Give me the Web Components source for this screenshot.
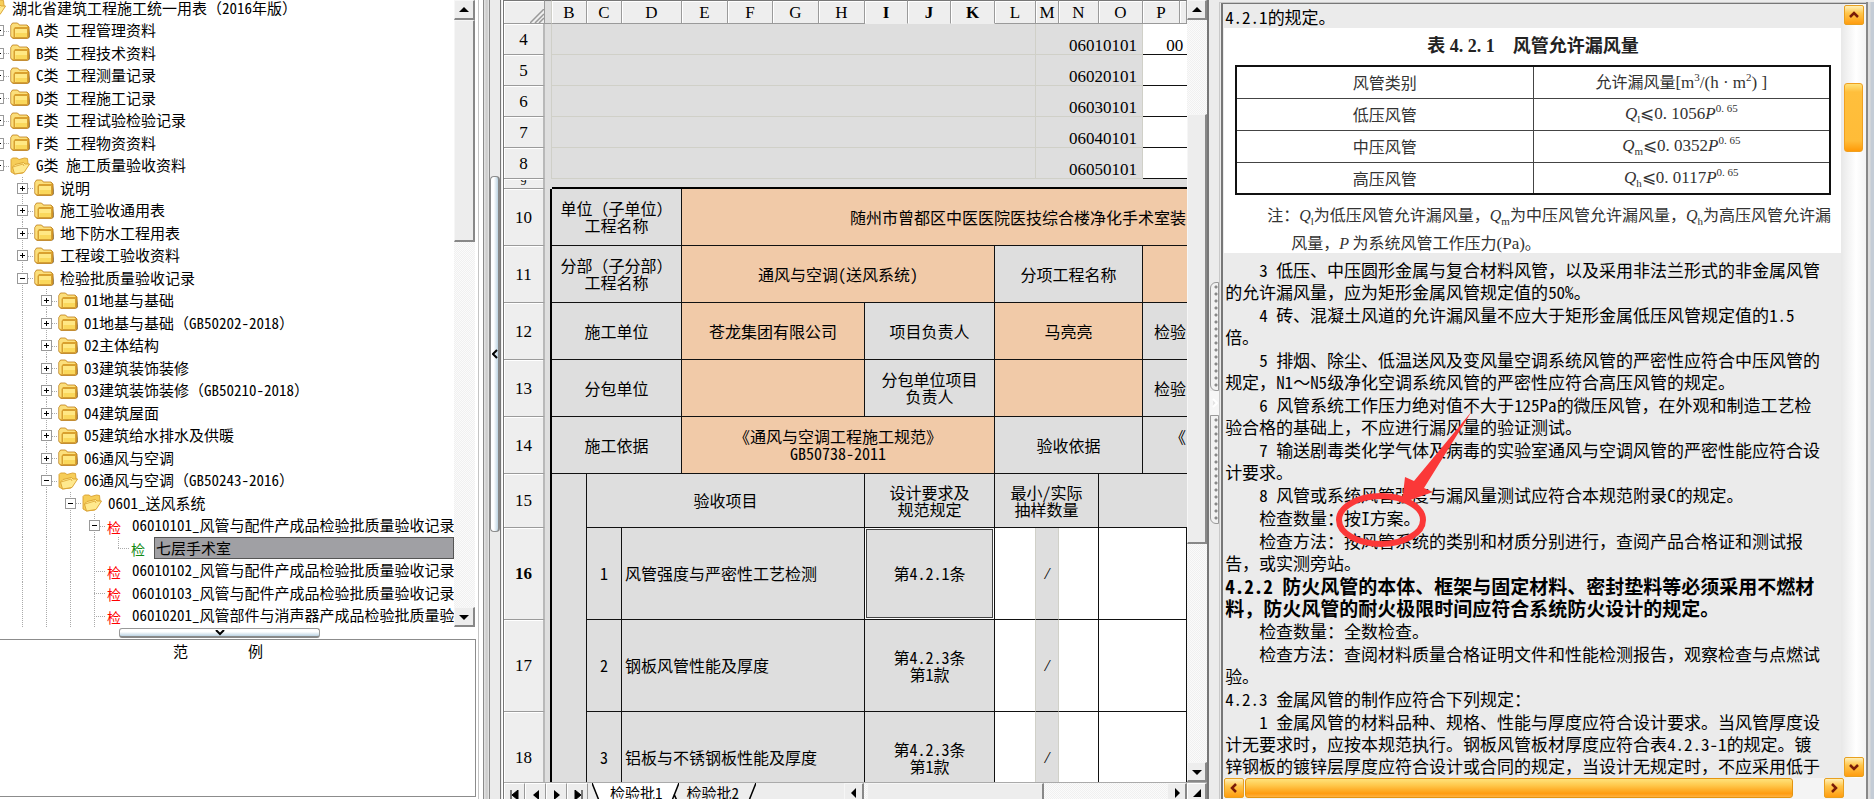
<!DOCTYPE html>
<html lang="zh-CN">
<head>
<meta charset="utf-8">
<title>施工资料管理</title>
<style>
  body { margin: 0; background: #ebebeb; font-family: "Noto Sans CJK SC", "Liberation Sans", sans-serif; color: #000; }
</style>
</head>
<body>
<doc-app></doc-app>
<script>
const BASE = `
  *, *::before, *::after { box-sizing: border-box; }
  .h { font-feature-settings: "hwid" 1; white-space: pre-wrap; }
  button { font: inherit; color: inherit; margin: 0; padding: 0; border: 0; background: none; }
`;
/* wraps Latin runs so that they take the half-width forms of the CJK font */
const tx = s => s.replace(/[A-Za-z0-9_.\-\/%() ]+/g, m => `<span class="h">${m}</span>`);

function define(name, render) {
  customElements.define(name, class extends HTMLElement {
    connectedCallback() {
      if (!this.shadowRoot) this.attachShadow({ mode: 'open' }).innerHTML = `<style>${BASE}</style>` + render(this);
    }
  });
}

/* ---------- application shell ---------- */
define('doc-app', () => `
<style>
  :host { display: flex; height: 100vh; overflow: hidden; background: #ebebeb; }
  .left { flex: 0 0 478px; display: flex; flex-direction: column; min-width: 0; background: #fff; }
  .sheet { flex: 1 1 0; min-width: 0; }
  .right { flex: 0 0 650px; }
  .fold { height: 12px; flex: none; padding: 1px 0 0 119px; }
  .fold button { display: flex; justify-content: center; align-items: center; width: 201px; height: 10px; border: 1px solid #999; border-radius: 3px; border-bottom: 2px solid #888; background: linear-gradient(#fff 40%, #bcd3e2); }
  tree-view { flex: none; height: 627px; }
  .sample { flex: 1; margin: 0 2px 2px 0; border: solid #8c8c8c; border-width: 1px 1px 1px 0; font-size: 15px; line-height: 22px; padding-left: 173px; white-space: pre; }
</style>
<div class="left">
  <tree-view></tree-view>
  <div class="fold"><button aria-label="折叠"><svg width="10" height="6" viewBox="0 0 10 6"><path d="M1 0l4 4 4-4" fill="none" stroke="#000" stroke-width="2"/></svg></button></div>
  <div class="sample">范　　　　例</div>
</div>
<pane-splitter side="left"></pane-splitter>
<sheet-view class="sheet"></sheet-view>
<pane-splitter side="right"></pane-splitter>
<spec-view class="right"></spec-view>`);

define('pane-splitter', el => el.getAttribute('side') === 'left' ? `
<style>
  :host { display: flex; flex: none; width: 26px; border-left: 1px solid #c4c4c4; background: #ebebeb; }
  .a { width: 11px; border: solid #8a8a8a; border-width: 0 1px 0 0; background: linear-gradient(90deg, #fff 4px, #8a8a8a 4px, #8a8a8a 5px, #e4e4e4 5px, #c8c8c8 8px, #ebebeb); }
  .b { width: 10px; padding-top: 176px; }
  .b button { display: flex; align-items: center; justify-content: center; width: 10px; height: 356px; border: 1px solid #8c8c8c; border-right: 2px solid #888; border-radius: 4px; background: linear-gradient(90deg, #fff 40%, #bcd3e2); }
  .c { flex: 1; border: solid #777; border-width: 0 1px; background: linear-gradient(90deg, #ddd, #fff 50%); }
</style><div class="a"></div><div class="b"><button aria-label="收起"><svg width="6" height="10" viewBox="0 0 6 10"><path d="M5 1L1 5l4 4" fill="none" stroke="#000" stroke-width="2"/></svg></button></div><div class="c"></div>` : `
<style>
  :host { display: flex; flex-direction: column; flex: none; width: 12px; background: #ebebeb; border-left: 2px solid #777; padding-top: 282px; align-items: flex-end; }
  i { width: 9px; height: 109px; border: 1px solid #999; border-radius: 6px 0 0 6px; background: #f2f2f2 radial-gradient(circle at 5px 4px, #888 1px, transparent 2px) 0 0 / 8px 7px; }
  i + button + i { border-radius: 0 0 0 6px; }
  button { width: 9px; height: 24px; background: #f6f6f6; display: flex; align-items: center; justify-content: center; }
</style><i></i><button aria-label="展开"><svg width="6" height="10" viewBox="0 0 6 10"><path d="M1 1l4 4-4 4" fill="#e4e4e4" stroke="#fff" stroke-width="2"/></svg></button><i></i>`);

/* ---------- project tree ---------- */
const FOLDER = `<svg width="20" height="18" viewBox="0 0 20 18"><path d="M2 17h16l2-2V6l-2 11z" fill="#8a8a80"/><path d="M.8 14.500V3.500L2.500 1h5l2 2h7.500l2 2v10l-1.500 1.500H3z" fill="#dca12c" stroke="#b97c1c" stroke-width=".8"/><path d="M1.200 5V3.300L2.800 1.400h4.600l2 2H16.500l1.300 1.500H5L3.500 7v8.500l-2.300-1.300z" fill="#fbdf7c"/><path d="M4.500 6.500h13v9H4.500z" fill="#ffe884" stroke="#d6a032" stroke-width="1"/><path d="M5.500 11h11.500v4H5.500z" fill="#fad85c"/></svg>`;
const OPEN = `<svg width="20" height="18" viewBox="0 0 20 18"><path d="M1 15V2.500L2.500 1h4.500l2 1.500L14.500 1l3 .5.5 5 .8.5-5.800 9L4.500 17z" fill="#f6cd58" stroke="#d9a030" stroke-width=".9"/><path d="M4.500 17l-2-7L5 7.500l8.500-2L15 7h4.600L14 15.500z" fill="#ffe98e" stroke="#d9a030" stroke-width=".9"/><path d="M3 10l10-3 1 2" fill="none" stroke="#e0ac3c" stroke-width=".9"/></svg>`;

define('tree-row', el => {
  const L = +el.getAttribute('level'), box = el.getAttribute('box'), icon = el.getAttribute('icon'), last = el.hasAttribute('last');
  const guides = Array.from({ length: L + 1 }, (_, i) => `<i class="g${i > 0 ? ' v' : ''}"></i>`).join('');
  const mark = icon === 'red' || icon === 'green' ? `<b class="${icon}">检</b>` : icon === 'open' ? OPEN : FOLDER;
  const own = L < 0 ? '<i class="g"></i>' : `<span class="g own ${last ? 'half' : 'v'}">${box ? `<button aria-label="${box === '+' ? '展开' : '收起'}" class="${box === '+' ? 'plus' : ''}"></button>` : ''}</span>`;
  return `
<style>
  :host { display: flex; align-items: stretch; white-space: nowrap; font-size: 15px; }
  :host([selected]) .label { background: #a0a0a4; border-color: #555; flex: 1; }
  .g { flex: none; width: 24px; position: relative; display: flex; align-items: center; justify-content: center; --dots: repeating-linear-gradient(#aaa 0 1px, transparent 1px 2px); }
  .v { background: var(--dots) 12px 0 / 1px 100% no-repeat; }
  .half { background: var(--dots) 12px 0 / 1px 50% no-repeat; }
  .own::after { content: ""; position: absolute; left: 12px; right: 0; top: 50%; height: 1px; background: repeating-linear-gradient(90deg, #aaa 0 1px, transparent 1px 2px); }
  .own button { z-index: 1; width: 11px; height: 11px; margin-left: 1px; border: 1px solid #999; background: linear-gradient(#000, #000) 2px 4px / 5px 1px no-repeat #fff; }
  .own button.plus { background: linear-gradient(#000, #000) 2px 4px / 5px 1px no-repeat, linear-gradient(#000, #000) 4px 2px / 1px 5px no-repeat, #fff; }
  .ic { flex: none; width: 24px; display: flex; align-items: center; }
  b { font-weight: 400; font-size: 14px; line-height: 20px; padding: 2px 0 0 1px; }
  .red { color: #f00; } .green { color: #128a12; }
  .label { border: 1px solid transparent; line-height: 20px; padding-left: 1px; }
</style>${guides}${own}<span class="ic">${mark}</span><span class="label"><slot></slot></span>`;
});

const TREE = [
  [-1, '', 'open', '湖北省建筑工程施工统一用表（2016年版）'],
  [0, '+', 'f', 'A类 工程管理资料'], [0, '+', 'f', 'B类 工程技术资料'], [0, '+', 'f', 'C类 工程测量记录'],
  [0, '+', 'f', 'D类 工程施工记录'], [0, '+', 'f', 'E类 工程试验检验记录'], [0, '+', 'f', 'F类 工程物资资料'],
  [0, '-', 'open', 'G类 施工质量验收资料'],
  [1, '+', 'f', '说明'], [1, '+', 'f', '施工验收通用表'], [1, '+', 'f', '地下防水工程用表'], [1, '+', 'f', '工程竣工验收资料'],
  [1, '-', 'f', '检验批质量验收记录'],
  [2, '+', 'f', '01地基与基础'], [2, '+', 'f', '01地基与基础（GB50202-2018）'], [2, '+', 'f', '02主体结构'],
  [2, '+', 'f', '03建筑装饰装修'], [2, '+', 'f', '03建筑装饰装修（GB50210-2018）'], [2, '+', 'f', '04建筑屋面'],
  [2, '+', 'f', '05建筑给水排水及供暖'], [2, '+', 'f', '06通风与空调'], [2, '-', 'open', '06通风与空调（GB50243-2016）'],
  [3, '-', 'open', '0601_送风系统'],
  [4, '-', 'red', '06010101_风管与配件产成品检验批质量验收记录'],
  [5, '', 'green', '七层手术室', 'selected last'],
  [4, '', 'red', '06010102_风管与配件产成品检验批质量验收记录'],
  [4, '', 'red', '06010103_风管与配件产成品检验批质量验收记录'],
  [4, '', 'red', '06010201_风管部件与消声器产成品检验批质量验'],
];
define('tree-view', () => `
<style>
  :host { display: flex; overflow: hidden; background: #fff; }
  .rows { flex: 1; min-width: 0; overflow: hidden; }
  .in { margin: -3px 0 0 -38px; }
  .h { white-space: pre; }
  tree-row { height: 22px; }
  tree-row:nth-child(even) { height: 23px; }
  scroll-bar { flex: none; width: 21px; margin-right: 3px; }
</style>
<div class="rows"><div class="in">${TREE.map(r => `<tree-row level="${r[0]}" box="${r[1]}" icon="${r[2]}" ${r[4] || ''}>${tx(r[3])}</tree-row>`).join('')}</div></div>
<scroll-bar axis="y" before="0" thumb="222"></scroll-bar>`);

/* ---------- classic scroll bar ---------- */
define('scroll-bar', el => {
  const y = el.getAttribute('axis') === 'y';
  const tri = d => `<svg width="10" height="10" viewBox="0 0 10 10"><path d="${d}"/></svg>`;
  return `
<style>
  :host { display: flex; flex-direction: ${y ? 'column' : 'row'}; background: repeating-conic-gradient(#f0f0f0 0 25%, #fbfbfb 0 50%) 0 0 / 2px 2px; }
  button, .t { flex: none; border: 1px solid #f6f6f6; border-right: 2px solid #888; border-bottom: 2px solid #888; background: #ededed; }
  button { display: flex; align-items: center; justify-content: center; ${y ? 'height: 20px' : 'width: 20px'}; }
  .t { ${y ? 'height' : 'width'}: ${el.getAttribute('thumb')}px; ${y ? 'margin-top' : 'margin-left'}: ${el.getAttribute('before')}px; }
  .s { flex: 1; }
</style>
<button aria-label="向前滚动">${tri(y ? 'M0 7l5-5 5 5z' : 'M7 0v10L2 5z')}</button><div class="t"></div><div class="s"></div><button aria-label="向后滚动">${tri(y ? 'M0 3h10L5 8z' : 'M3 0v10l5-5z')}</button>`;
});

/* ---------- spreadsheet ---------- */
const COLS = [41, 7, 35, 35, 60, 46, 45, 46, 46, 43, 43, 44, 41, 23, 40, 44, 37];
const heads = 'BCDEFGHIJKLMNOP'.split('').map(c => `<th scope="col" class="${'IJK'.includes(c) ? 'on' : ''}">${c}</th>`).join('');
const blank = (n, code, p) => `<tr class="r31"><th scope="row">${n}</th><td class="gap"></td><td colspan="11" class="f"></td><td colspan="3" class="f code">${code}</td><td colspan="2" class="p">${p}</td></tr>`;
const item = (n, k, name, rule, on) => `<tr class="r92"><th scope="row" class="${on ? 'on' : ''}">${n}</th><td class="gap edge"></td><td class="nb"></td><td>${tx(String(k))}</td><td colspan="5" class="name">${name}</td><td colspan="3" class="${on ? 'sel' : ''}">${rule.split('|').map(tx).join('<br>')}</td><td class="w nr"></td><td class="slash">/</td><td class="w"></td><td colspan="3" class="w"></td></tr>`;

define('sheet-view', () => `
<style>
  :host { display: flex; flex-direction: column; overflow: hidden; background: #ededed; }
  .main { flex: 1; min-height: 0; display: flex; }
  .grid { flex: 1; min-width: 0; overflow: hidden; background: #dedede; }
  .main > scroll-bar { flex: none; width: 20px; }
  table { table-layout: fixed; width: 100%; border-collapse: separate; border-spacing: 0; font-size: 16px; line-height: 17px; }
  td { padding: 0; overflow: hidden; text-align: center; vertical-align: middle; background: #dedede; border: solid #111; border-width: 0 1px 1px 0; }
  th { padding: 0; font: 17px/17px "Liberation Serif", serif; background: #eee; border: solid #9a9a9a; border-width: 0 1px 1px 0; box-shadow: inset 1px 1px #fff; }
  thead th { height: 24px; border-top: 1px solid #777; }
  tbody th { border-right: 2px solid #b8b8b8; }
  th.on { font-weight: 700; }
  thead th.on { border-bottom-color: #eee; }
  thead .gap { border-top: 1px solid #777; border-bottom: 1px solid #9a9a9a; }
  .gap { border: 0; border-right: 1px solid #cfcfc8; }
  .edge { border-right: 2px solid #000; }
  .r31 > * { height: 31px; }
  .r8 > * { height: 10px; line-height: 9px; font-size: 12px; }
  .r8 td { border: 0; }
  .r8 .top { border-bottom: 2px solid #000; }
  .r8 th div { height: 8px; line-height: 2px; overflow: hidden; }
  .r58 > * { height: 57px; }
  .r54 > * { height: 54px; }
  .r92 > * { height: 92px; }
  .f { border-color: #d0d0c8; }
  .code, .p { font: 17px/17px "Liberation Serif", serif; text-align: right; vertical-align: bottom; padding: 0 4px 0 0; }
  .code { padding-right: 5px; }
  .p, .w { background: #fff; }
  .nr { border-right-color: #d0d0c8; }
  .slash { border-right-color: #d0d0c8; font: italic 17px/17px "Liberation Serif", serif; }
  .o { background: #f1caa8; }
  .nb { border-bottom: 0; }
  .r { text-align: right; white-space: nowrap; padding-right: 1px; }
  .r, .p { border-right: 0; }
  .name { text-align: left; padding-left: 3px; }
  .sel { box-shadow: inset 0 0 0 1px #fff, inset 0 0 0 2px #444; }
  .bar { flex: none; height: 17px; display: flex; overflow: hidden; font-size: 15px; line-height: 20px; border-top: 1px solid #aaa; }
  .nav { flex: none; width: 21px; height: 20px; border: 1px solid #fff; border-right-color: #999; }
  .tabs { flex: 1 1 0; display: flex; min-width: 0; overflow: hidden; }
  .tab { flex: none; white-space: nowrap; height: 20px; padding: 0 9px 0 8px; }
  .tab.on { background: #fff; padding: 0 8px 0 10px; }
  .sl { flex: none; width: 8px; }
  .sl:first-child { margin-left: 4px; }
  .corner-mark { display: block; margin: 8px 0 0 auto; }
  .bar scroll-bar { flex: none; width: 343px; height: 20px; }
  .corner { flex: none; width: 20px; height: 20px; border: 1px solid #fff; border-right: 2px solid #888; display: flex; justify-content: center; align-items: center; }
</style>
<div class="main"><div class="grid"><table>
<colgroup>${COLS.map(w => `<col style="width:${w}px">`).join('')}<col></colgroup>
<thead><tr><th><svg class="corner-mark" width="14" height="14" viewBox="0 0 14 14"><path d="M0 14L14 0M5 14l9-9M9 14l5-5" stroke="#999" stroke-width="1.500"/></svg></th><td class="gap"></td>${heads}<th></th></tr></thead>
<tbody>
${blank(4, '06010101', '00')}${blank(5, '06020101', '')}${blank(6, '06030101', '')}${blank(7, '06040101', '')}${blank(8, '06050101', '')}
<tr class="r8"><th scope="row"><div>9</div></th><td class="gap"></td><td colspan="16" class="top"></td></tr>
<tr class="r58"><th scope="row">10</th><td class="gap edge"></td><td colspan="3">单位（子单位）<br>工程名称</td><td colspan="13" class="o r">随州市曾都区中医医院医技综合楼净化手术室装</td></tr>
<tr class="r58"><th scope="row">11</th><td class="gap edge"></td><td colspan="3">分部（子分部）<br>工程名称</td><td colspan="7" class="o">${tx('通风与空调(送风系统)')}</td><td colspan="4">分项工程名称</td><td colspan="2" class="o r"></td></tr>
<tr class="r58"><th scope="row">12</th><td class="gap edge"></td><td colspan="3">施工单位</td><td colspan="4" class="o">苍龙集团有限公司</td><td colspan="3">项目负责人</td><td colspan="4" class="o">马亮亮</td><td colspan="2" class="r">检验</td></tr>
<tr class="r58"><th scope="row">13</th><td class="gap edge"></td><td colspan="3">分包单位</td><td colspan="4" class="o"></td><td colspan="3">分包单位项目<br>负责人</td><td colspan="4" class="o"></td><td colspan="2" class="r">检验</td></tr>
<tr class="r58"><th scope="row">14</th><td class="gap edge"></td><td colspan="3">施工依据</td><td colspan="7" class="o">《通风与空调工程施工规范》<br>${tx('GB50738-2011')}</td><td colspan="4">验收依据</td><td colspan="2" class="r">《<br>&nbsp;</td></tr>
<tr class="r54"><th scope="row">15</th><td class="gap edge"></td><td class="nb"></td><td colspan="6">验收项目</td><td colspan="3">设计要求及<br>规范规定</td><td colspan="3">${tx('最小/实际')}<br>抽样数量</td><td colspan="3" class="r"></td></tr>
${item(16, 1, '风管强度与严密性工艺检测', '第4.2.1条', 1)}
${item(17, 2, '钢板风管性能及厚度', '第4.2.3条|第1款')}
${item(18, 3, '铝板与不锈钢板性能及厚度', '第4.2.3条|第1款')}
</tbody></table></div>
<scroll-bar axis="y" before="94" thumb="430"></scroll-bar></div>
<div class="bar">
  <button class="nav" aria-label="首页"><svg width="12" height="10" viewBox="0 0 12 10"><path d="M2 0v10M3 5l6-5v10z" stroke="#000"/></svg></button>
  <button class="nav" aria-label="上一页"><svg width="12" height="10" viewBox="0 0 12 10"><path d="M3 5l6-5v10z"/></svg></button>
  <button class="nav" aria-label="下一页"><svg width="12" height="10" viewBox="0 0 12 10"><path d="M9 5L3 0v10z"/></svg></button>
  <button class="nav" aria-label="末页"><svg width="12" height="10" viewBox="0 0 12 10"><path d="M10 0v10M9 5L3 0v10z" stroke="#000"/></svg></button>
  <div class="tabs">
    <svg class="sl" height="20" viewBox="0 0 8 20"><path d="M0 0h8v20z" fill="#fff"/><path d="M0 0l8 20" stroke="#000" stroke-width="1.500"/></svg>
    <button class="tab on">检验批${tx('1')}</button>
    <svg class="sl" height="20" viewBox="0 0 8 20"><path d="M0 0h8L0 20z" fill="#fff"/><path d="M8 0L0 20M3 11l4 9" stroke="#000" stroke-width="1.500" fill="none"/></svg>
    <button class="tab">检验批${tx('2')}</button>
    <svg class="sl" height="20" viewBox="0 0 8 20"><path d="M8 0L0 20" stroke="#000" stroke-width="1.500"/></svg>
  </div>
  <scroll-bar axis="x" before="3" thumb="177"></scroll-bar>
  <button class="corner" aria-label="调整"><svg width="8" height="8" viewBox="0 0 8 8"><path d="M8 0v8H0z"/></svg></button>
</div>`);

/* ---------- specification text ---------- */
const PARAS = [
  ['3 低压、中压圆形金属与复合材料风管，以及采用非法兰形式的非金属风管的允许漏风量，应为矩形金属风管规定值的50%。', 1],
  ['4 砖、混凝土风道的允许漏风量不应大于矩形金属低压风管规定值的1.5倍。', 1],
  ['5 排烟、除尘、低温送风及变风量空调系统风管的严密性应符合中压风管的规定，N1～N5级净化空调系统风管的严密性应符合高压风管的规定。', 1],
  ['6 风管系统工作压力绝对值不大于125Pa的微压风管，在外观和制造工艺检验合格的基础上，不应进行漏风量的验证测试。', 1],
  ['7 输送剧毒类化学气体及病毒的实验室通风与空调风管的严密性能应符合设计要求。', 1],
  ['8 风管或系统风管强度与漏风量测试应符合本规范附录C的规定。', 1],
  ['检查数量：按I方案。', 1],
  ['检查方法：按风管系统的类别和材质分别进行，查阅产品合格证和测试报告，或实测旁站。', 1],
  ['4.2.2 防火风管的本体、框架与固定材料、密封垫料等必须采用不燃材<br>料，防火风管的耐火极限时间应符合系统防火设计的规定。', 2],
  ['检查数量：全数检查。', 1],
  ['检查方法：查阅材料质量合格证明文件和性能检测报告，观察检查与点燃试验。', 1],
  ['4.2.3 金属风管的制作应符合下列规定：', 0],
  ['1 金属风管的材料品种、规格、性能与厚度应符合设计要求。当风管厚度设计无要求时，应按本规范执行。钢板风管板材厚度应符合表4.2.3-1的规定。镀锌钢板的镀锌层厚度应符合设计或合同的规定，当设计无规定时，不应采用低于', 1],
];
const para = ([s, k]) => `<p class="${['', 'in', 'bold'][k]}">${s.split('<br>').map(tx).join('<br>')}</p>`;

define('gold-button', el => `
<style>
  :host { display: block; flex: none; width: 20px; height: 20px; }
  button { display: block; width: 100%; height: 100%; border: 1px solid #e8a020; border-radius: 2px; background: linear-gradient(#fff0b8, #ffc64c 40%, #ff9d10); }
  svg { display: block; margin: auto; }
</style><button aria-label="滚动"><svg width="12" height="12" viewBox="0 0 12 12"><path d="${{ u: 'M2 8l4-4 4 4', d: 'M2 4l4 4 4-4', l: 'M8 2L4 6l4 4', r: 'M4 2l4 4-4 4' }[el.getAttribute('dir')]}" fill="none" stroke="#7a1c08" stroke-width="2.500"/></svg></button>`);

define('leak-table', () => `
<style>
  :host { display: block; background: #fff; color: #333; height: 225px; overflow: hidden; padding: 0 10px 0 11px; font-size: 16px; line-height: 27px; }
  table { width: 100%; table-layout: fixed; border-collapse: collapse; border: 2px solid #111; }
  caption { font-weight: 700; font-size: 18px; line-height: 36px; height: 37px; color: #222; word-break: keep-all; }
  caption, em, .m { font-family: "Liberation Serif", "Noto Sans CJK SC", serif; }
  .m { font-size: 17px; }
  td, th { border: 1px solid #444; height: 32px; padding: 0; line-height: 20px; text-align: center; font-weight: 400; }
  sub, sup { font-size: 11px; line-height: 0; }
  .note { margin: 6px 0 0; padding-left: 56px; text-indent: -24px; white-space: nowrap; }
  .note em, .note sub { font-family: "Liberation Serif", serif; }
</style>
<table><caption>表 4. 2. 1　风管允许漏风量</caption>
<tr><th scope="col">风管类别</th><th scope="col">允许漏风量<span class="m">[m<sup>3</sup>/(h · m<sup>2</sup>) ]</span></th></tr>
<tr><td>低压风管</td><td class="m"><em>Q</em><sub>l</sub>⩽0. 1056<em>P</em><sup>0. 65</sup></td></tr>
<tr><td>中压风管</td><td class="m"><em>Q</em><sub>m</sub>⩽0. 0352<em>P</em><sup>0. 65</sup></td></tr>
<tr><td>高压风管</td><td class="m"><em>Q</em><sub>h</sub>⩽0. 0117<em>P</em><sup>0. 65</sup></td></tr></table>
<p class="note">注：<em>Q</em><sub>l</sub>为低压风管允许漏风量，<em>Q</em><sub>m</sub>为中压风管允许漏风量，<em>Q</em><sub>h</sub>为高压风管允许漏<br>风量，<em>P</em> 为系统风管工作压力<span class="m">(Pa)</span>。</p>`);

define('spec-view', () => `
<style>
  :host { display: flex; background: #ebebeb; padding-top: 2px; }
  .frame { flex: 1; min-width: 0; border: solid #c8c8c8; border-width: 1px 0 0 1px; display: flex; flex-direction: column; }
  .inner { flex: 1; min-height: 0; display: flex; flex-direction: column; margin-left: 1px; border: solid #777; border-width: 1px 0 0 2px; }
  :host::after { content: ""; flex: none; width: 8px; border: solid #888; border-width: 0 0 0 2px; background: linear-gradient(90deg, #dcdcdc 2px, #c4ccd6 3px); }
  .row { flex: 1; min-height: 0; display: flex; }
  .doc { position: relative; flex: 1; min-width: 0; margin-left: 1px; overflow: hidden; font-size: 17px; line-height: 22px; }
  p { margin: 0 0 1px; }
  .doc > p { padding-left: 1px; max-width: 598px; }
  .doc > .first { height: 24px; line-height: 25px; margin: 0; }
  .in { text-indent: 2em; }
  .bold { font-weight: 700; font-size: 19px; white-space: nowrap; }
  leak-table { margin-bottom: 6px; }
  .v { flex: none; width: 25px; padding: 1px 0 1px 3px; display: flex; flex-direction: column; background: linear-gradient(90deg, #e8e8e8, #fff 60%, #f4f4f4); }
  .v i { width: 19px; height: 69px; margin-top: 58px; border-radius: 3px; border: 1px solid #f0a020; background: linear-gradient(#ffe27a, #ffbf3c 12%, #ffbc38 85%, #ff9a08); }
  .v s, .x s { flex: 1; }
  .x { flex: none; height: 21px; display: flex; padding: 0 22px 1px 1px; background: #f4f4f4; }
  .x i { flex: none; width: 548px; margin-left: 1px; border-radius: 3px; border: 1px solid #e39410; background: linear-gradient(#ffe27a, #ffc84c 35%, #ff9c10 80%, #ffb040); }
  .mark { position: absolute; left: 101px; top: 400px; pointer-events: none; }
</style>
<div class="frame"><div class="inner"><div class="row"><div class="doc">
<p class="first">${tx('4.2.1的规定。')}</p>
<leak-table></leak-table>
${PARAS.map(para).join('')}
<svg class="mark" width="160" height="150" viewBox="1326 404 160 150"><ellipse cx="1382" cy="520" rx="42" ry="24" fill="none" stroke="#fb3838" stroke-width="6"/><path d="M1473 411L1425 488l9 4-31 11 3-26 9 4z" fill="#fb3838"/></svg>
</div>
<div class="v"><gold-button dir="u"></gold-button><i></i><s></s><gold-button dir="d"></gold-button></div></div>
<div class="x"><gold-button dir="l"></gold-button><i></i><s></s><gold-button dir="r"></gold-button></div></div></div>`);
</script>
</body>
</html>
